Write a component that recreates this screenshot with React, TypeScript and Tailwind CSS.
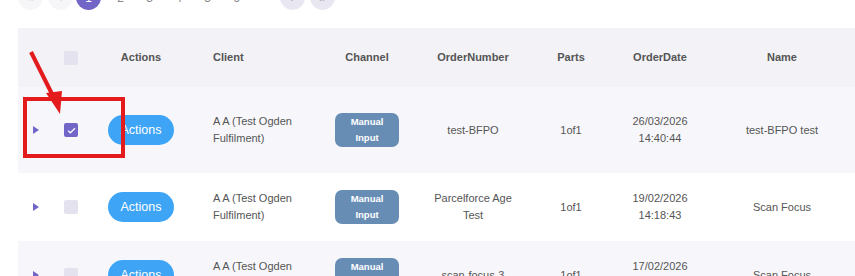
const rows = [
  {
    client: "A A (Test Ogden Fulfilment)",
    order: "test-BFPO",
    parts: "1of1",
    date: "26/03/2026",
    time: "14:40:44",
    name: "test-BFPO test",
    checked: true,
    h: "h-[86px]",
    bg: "bg-[#f7f7fb]",
  },
  {
    client: "A A (Test Ogden Fulfilment)",
    order: "Parcelforce Age Test",
    parts: "1of1",
    date: "19/02/2026",
    time: "14:18:43",
    name: "Scan Focus",
    checked: false,
    h: "h-[68px]",
    bg: "bg-white",
  },
  {
    client: "A A (Test Ogden Fulfilment)",
    order: "scan-focus-3",
    parts: "1of1",
    date: "17/02/2026",
    time: "10:02:11",
    name: "Scan Focus",
    checked: false,
    h: "h-[68px]",
    bg: "bg-[#f7f7fb]",
  },
];

function Checkbox({ checked }: { checked?: boolean }) {
  if (checked) {
    return (
      <span className="mx-auto flex h-[14px] w-[14px] items-center justify-center rounded-[2px] bg-[#7166c8]">
        <svg width="9" height="7" viewBox="0 0 9 7" fill="none">
          <path d="M1 3.6 3.3 5.8 8 1.2" stroke="white" strokeWidth="1.2" />
        </svg>
      </span>
    );
  }
  return <span className="mx-auto block h-[14px] w-[14px] rounded-[2px] bg-[#e4e2ef]" />;
}

export default function App() {
  return (
    <div className="relative h-[276px] w-[855px] overflow-hidden bg-white font-['Liberation_Sans',Arial,sans-serif] text-[#555]">
      {/* pagination, cut by the top edge */}
      <div className="mt-[-15px] flex h-[25px] items-center pl-[18px] text-[12px]">
        <span className="flex h-[25px] w-[25px] items-center justify-center rounded-full bg-[#f6f6f9] text-[#ddd]">«</span>
        <span className="ml-[5px] flex h-[25px] w-[25px] items-center justify-center rounded-full bg-[#f6f6f9] text-[#ddd]">‹</span>
        <span className="ml-[3px] flex h-[25px] w-[25px] items-center justify-center rounded-full bg-[#7166c8] text-white">1</span>
        <div className="ml-[5px] flex text-[#888]">
          {["2", "3", "4", "5", "6"].map((n) => (
            <span key={n} className="w-[29px] text-center">{n}</span>
          ))}
        </div>
        <span className="ml-[29px] flex h-[25px] w-[25px] items-center justify-center rounded-full bg-[#e9e7f1] text-[#aaa]">›</span>
        <span className="ml-[5px] flex h-[25px] w-[25px] items-center justify-center rounded-full bg-[#e9e7f1] text-[#aaa]">»</span>
      </div>

      <div className="mt-[18px] pl-[18px]">
        <table className="w-[838px] table-fixed border-collapse text-[11px]">
          <colgroup>
            <col className="w-[35px]" />
            <col className="w-[36px]" />
            <col className="w-[104px]" />
            <col className="w-[125px]" />
            <col className="w-[98px]" />
            <col className="w-[114px]" />
            <col className="w-[82px]" />
            <col className="w-[96px]" />
            <col className="w-[148px]" />
          </colgroup>
          <thead>
            <tr className="h-[59px] bg-[#f2f2f7] font-bold">
              <th />
              <th>
                <Checkbox />
              </th>
              <th className="text-center font-bold">Actions</th>
              <th className="pl-[20px] text-left font-bold">Client</th>
              <th className="text-center font-bold">Channel</th>
              <th className="text-center font-bold">OrderNumber</th>
              <th className="text-center font-bold">Parts</th>
              <th className="text-center font-bold">OrderDate</th>
              <th className="text-center font-bold">Name</th>
            </tr>
          </thead>
          <tbody>
            {rows.map((r, i) => (
              <tr key={i} className={`${r.h} ${r.bg}`}>
                <td>
                  <span className="ml-[15px] block h-0 w-0 border-y-[4.5px] border-l-[6px] border-y-transparent border-l-[#7166c8]" />
                </td>
                <td>
                  <Checkbox checked={r.checked} />
                </td>
                <td>
                  <button className="mx-auto flex h-[30px] w-[66px] items-center justify-center rounded-full bg-[#3ea5f6] text-[12.5px] text-white">
                    Actions
                  </button>
                </td>
                <td className="pl-[20px] pr-[14px] leading-[17px]">{r.client}</td>
                <td>
                  <div className="mx-auto flex h-[34px] w-[64px] flex-col items-center justify-center rounded-[7px] bg-[#688db5] text-[9.5px] font-bold leading-[16.5px] text-white">
                    <span>Manual</span>
                    <span>Input</span>
                  </div>
                </td>
                <td className="px-[16px] text-center leading-[17px]">{r.order}</td>
                <td className="text-center">{r.parts}</td>
                <td className="text-center leading-[17.5px]">
                  <div>{r.date}</div>
                  <div>{r.time}</div>
                </td>
                <td className="text-center">{r.name}</td>
              </tr>
            ))}
          </tbody>
        </table>
      </div>

      {/* red annotation drawn over the table */}
      <svg className="pointer-events-none absolute left-0 top-0" width="855" height="276" viewBox="0 0 855 276">
        <line x1="31" y1="52" x2="55" y2="100" stroke="#e31b1d" strokeWidth="4" />
        <polygon points="46,93 62,91 60,114" fill="#e31b1d" />
        <rect x="25" y="99" width="98" height="57" fill="none" stroke="#e31b1d" strokeWidth="4" />
      </svg>
    </div>
  );
}
